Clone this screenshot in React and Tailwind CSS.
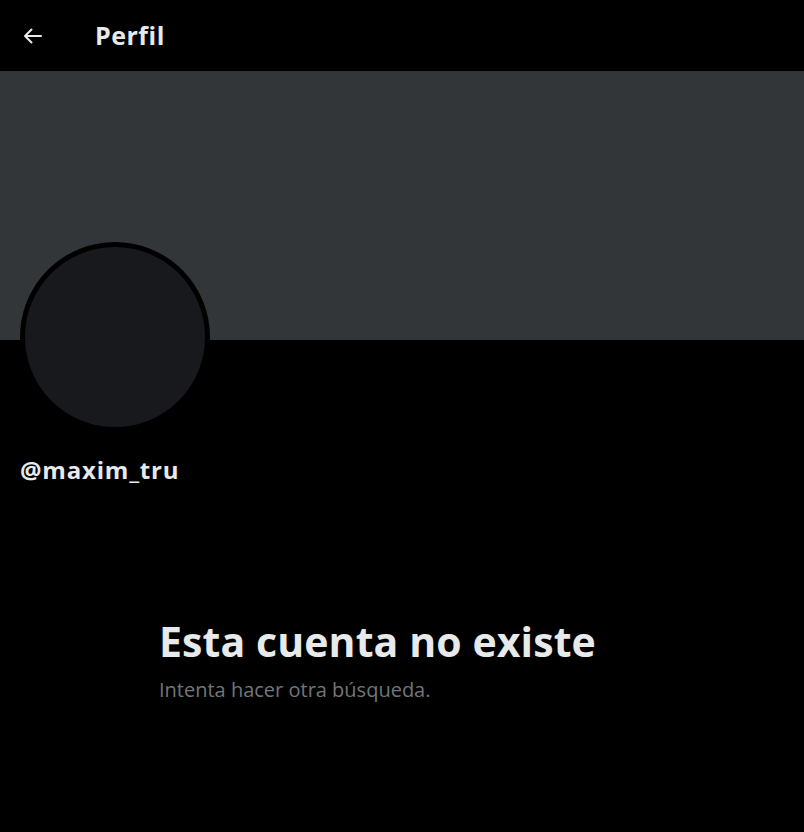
export default function App() {
  return (
    <div className="min-h-[832px] w-full bg-black text-[#e7e9ea] font-['Open_Sans',sans-serif]">
      {/* Header */}
      <div className="flex h-[71px] items-center">
        <div className="flex w-[95px] pl-[21px]">
          <svg width="24" height="24" viewBox="0 0 24 24" fill="none" stroke="#e7e9ea" strokeWidth="2" strokeLinecap="round" strokeLinejoin="round">
            <path d="M20 12H4M10.5 5.5L4 12l6.5 6.5" />
          </svg>
        </div>
        <h1 className="text-[25px] font-bold leading-none tracking-[0.5px]">Perfil</h1>
      </div>

      {/* Banner */}
      <div className="h-[269px] bg-[#333639]" />

      {/* Avatar + handle */}
      <div className="px-5">
        <div className="-mt-[98px] h-[190px] w-[190px] rounded-full border-[5px] border-black bg-[#18191c]" />
        <div className="mt-[26px] text-[24px] font-bold leading-none tracking-[0.8px]">@maxim_tru</div>
      </div>

      {/* Empty state */}
      <div className="pl-[159px] pt-[139px]">
        <h2 className="text-[41px] font-bold leading-none tracking-[0.1px]">Esta cuenta no existe</h2>
        <p className="mt-[18px] text-[20px] text-[#71767b] leading-none">Intenta hacer otra búsqueda.</p>
      </div>
    </div>
  );
}
